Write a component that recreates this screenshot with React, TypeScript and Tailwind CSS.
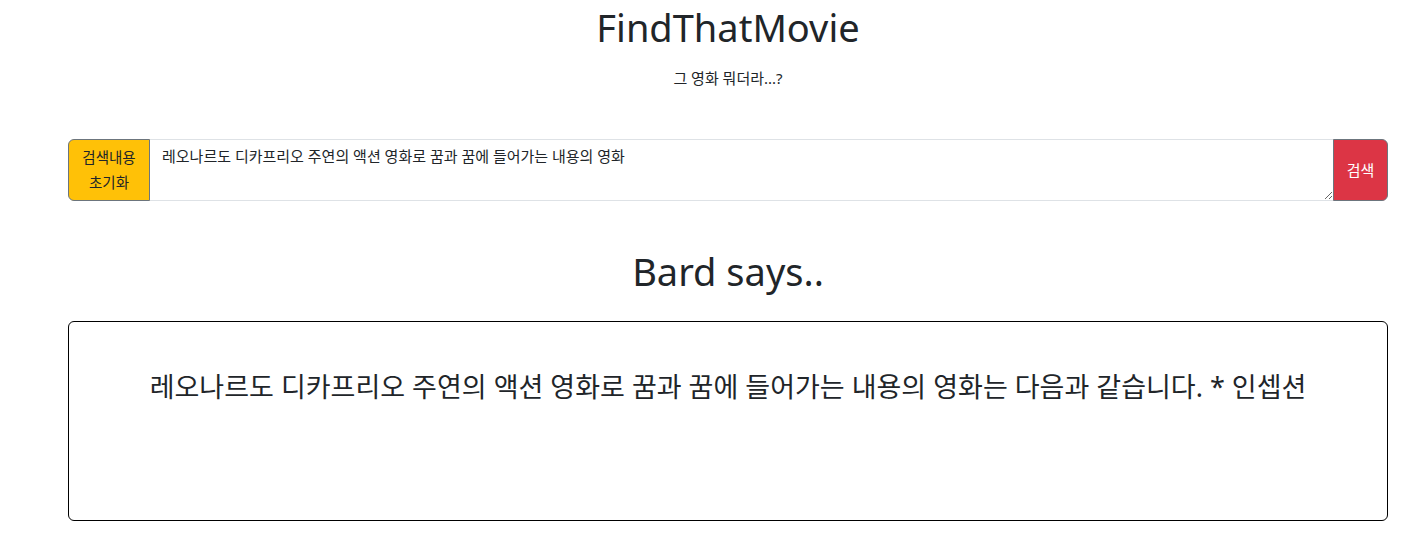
import React from 'react';

const App: React.FC = () => {
  return (
    <div
      className="min-h-[545px] bg-white text-[#212529]"
      style={{ fontFamily: '"Noto Sans", "Noto Sans CJK KR", sans-serif' }}
    >
      <div className="ml-[68px] w-[1320px]">
        <header className="text-center">
          <h1 className="pt-[2px] text-[38px] leading-[50px] font-normal">FindThatMovie</h1>
          <p className="mt-[16px] text-[15px] leading-[20px]">그 영화 뭐더라...?</p>
        </header>

        <div className="mt-[51px] flex h-[62px]">
          <button className="w-[82px] shrink-0 rounded-l-[6px] border border-[#6c757d] bg-[#ffc107] px-1 text-[14.5px] leading-[25px] text-[#212529]">
            검색내용
            <br />
            초기화
          </button>
          <textarea
            className="flex-1 resize-y border-y border-[#dee2e6] px-[12px] py-[6px] text-[15px] leading-[20px] text-[#212529] outline-none"
            defaultValue="레오나르도 디카프리오 주연의 액션 영화로 꿈과 꿈에 들어가는 내용의 영화"
          />
          <button className="w-[55px] shrink-0 rounded-r-[6px] border border-[#6c757d] bg-[#dc3545] text-[15px] text-white">
            검색
          </button>
        </div>

        <h2 className="mt-[42px] text-center text-[38px] leading-[56px] font-normal">Bard says..</h2>

        <div className="mt-[22px] h-[200px] rounded-[6px] border border-black px-[20px] pt-[46px] text-center">
          <p className="text-[27px] leading-[38px]">
            레오나르도 디카프리오 주연의 액션 영화로 꿈과 꿈에 들어가는 내용의 영화는 다음과 같습니다. * 인셉션
          </p>
        </div>
      </div>
    </div>
  );
};

export default App;
